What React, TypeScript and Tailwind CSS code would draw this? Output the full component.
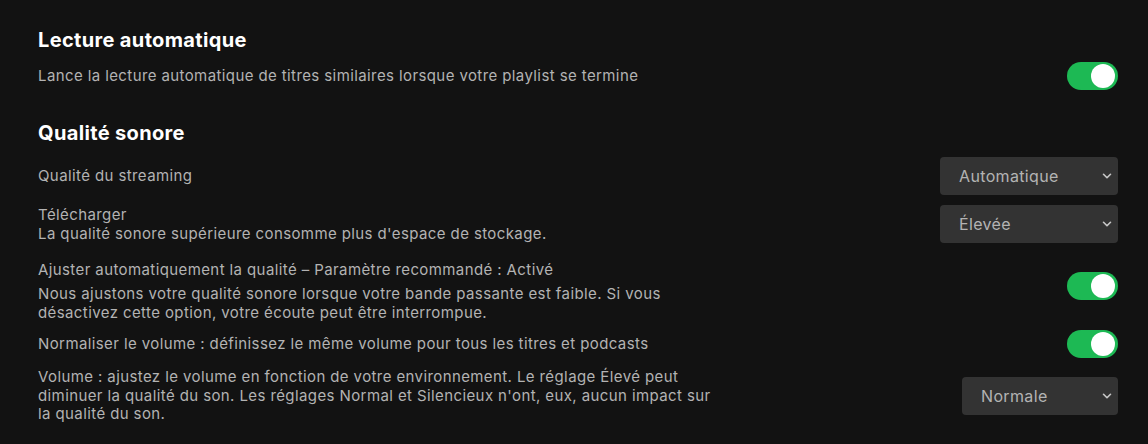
import { ChevronDown } from "lucide-react";

const Toggle = ({ className = "" }: { className?: string }) => (
  <div
    className={`flex h-[28px] w-[51px] shrink-0 items-center justify-end rounded-full bg-[#1db954] pr-[3px] ${className}`}
  >
    <div className="h-[24px] w-[24px] rounded-full bg-white" />
  </div>
);

const Select = ({ value, width }: { value: string; width: string }) => (
  <div
    className={`flex h-[38px] shrink-0 items-center justify-between rounded-[4px] bg-[#333333] pl-[19px] pr-[4px] text-[16px] tracking-[0.35px] text-[#b3b3b3] ${width}`}
  >
    <span>{value}</span>
    <ChevronDown size={14} strokeWidth={2.75} className="text-[#c8c8c8]" />
  </div>
);

const App = () => {
  return (
    <div
      className="min-h-[444px] bg-[#121212] pl-[38px] pr-[30px] pt-[26px] text-[15px] tracking-[0.4px] text-[#b3b3b3]"
      style={{ fontFamily: "Inter, 'Noto Sans', sans-serif" }}
    >
      <h2 className="text-[20px] font-bold leading-[28px] tracking-[0.35px] text-white">
        Lecture automatique
      </h2>
      <div className="mt-[8px] flex items-center justify-between">
        <p>
          Lance la lecture automatique de titres similaires lorsque votre
          playlist se termine
        </p>
        <Toggle />
      </div>

      <h2 className="mt-[29px] text-[20px] font-bold leading-[28px] tracking-[0.35px] text-white">
        Qualité sonore
      </h2>

      <div className="mt-[10px] flex items-center justify-between">
        <p>Qualité du streaming</p>
        <Select value="Automatique" width="w-[178px]" />
      </div>

      <div className="mt-[10px] flex items-center justify-between">
        <div className="leading-[19px]">
          <p>Télécharger</p>
          <p>La qualité sonore supérieure consomme plus d'espace de stockage.</p>
        </div>
        <Select value="Élevée" width="w-[178px]" />
      </div>

      <div className="mt-[17px] flex items-start justify-between">
        <div className="leading-[19px]">
          <p>
            Ajuster automatiquement la qualité – Paramètre recommandé : Activé
          </p>
          <p className="mt-[5px]">
            Nous ajustons votre qualité sonore lorsque votre bande passante est
            faible. Si vous
            <br />
            désactivez cette option, votre écoute peut être interrompue.
          </p>
        </div>
        <Toggle className="mt-[12px]" />
      </div>

      <div className="mt-[8px] flex items-center justify-between">
        <p>
          Normaliser le volume : définissez le même volume pour tous les titres
          et podcasts
        </p>
        <Toggle />
      </div>

      <div className="mt-[10px] flex items-center justify-between pb-[18px]">
        <p className="leading-[18.5px]">
          Volume : ajustez le volume en fonction de votre environnement. Le
          réglage Élevé peut
          <br />
          diminuer la qualité du son. Les réglages Normal et Silencieux n'ont,
          eux, aucun impact sur
          <br />
          la qualité du son.
        </p>
        <Select value="Normale" width="w-[156px]" />
      </div>
    </div>
  );
};

export default App;
